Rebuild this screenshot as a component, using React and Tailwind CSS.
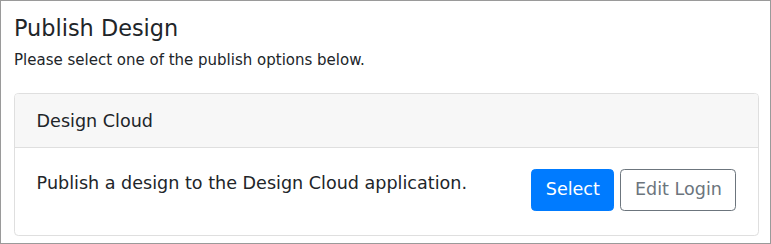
export default function App() {
  return (
    <div
      className="w-[771px] h-[244px] border border-[#9a9a9a] bg-white text-[#212529] pl-[13px] pr-[11px] pt-[13.5px]"
      style={{ fontFamily: '"DejaVu Sans", Verdana, sans-serif' }}
    >
      <h5 className="text-[22.4px] leading-[26px] font-normal">Publish Design</h5>
      <p className="mt-[8.2px] text-[15px] leading-[22.7px]">
        Please select one of the publish options below.
      </p>
      <div className="mt-[21.6px] border border-[#dfdfdf] rounded-[4.3px] overflow-hidden">
        <div className="bg-[#f7f7f7] border-b border-[#dfdfdf] px-[21.6px] pt-[15px] pb-[12px] text-[17.57px] leading-[25.9px]">
          Design Cloud
        </div>
        <div className="px-[21.6px] pt-[21.6px] pb-[24px] flex items-start justify-between">
          <p className="text-[17.57px] leading-[25.9px] pt-[1.5px]">
            Publish a design to the Design Cloud application.
          </p>
          <div className="flex gap-[6px]">
            <button className="bg-[#007bff] text-white border border-[#007bff] rounded-[4.3px] px-[13.5px] py-[6.8px] text-[17.57px] leading-[25.9px]">
              Select
            </button>
            <button className="bg-white text-[#6c757d] border border-[#6c757d] rounded-[4.3px] px-[13.5px] py-[6.8px] text-[17.57px] leading-[25.9px]">
              Edit Login
            </button>
          </div>
        </div>
      </div>
    </div>
  );
}
